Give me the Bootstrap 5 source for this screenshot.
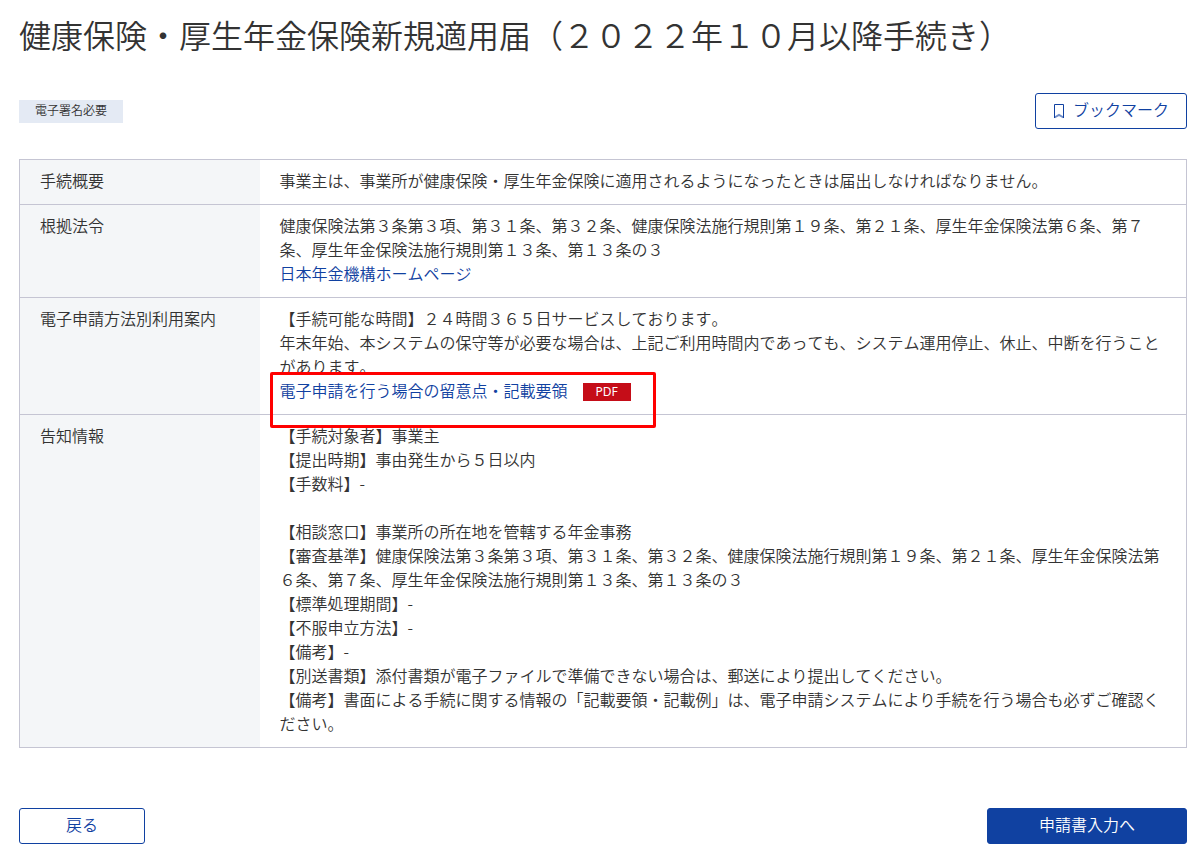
<!DOCTYPE html>
<html lang="ja">
<head>
<meta charset="utf-8">
<meta name="viewport" content="width=device-width, initial-scale=1">
<title>健康保険・厚生年金保険新規適用届</title>
<link rel="stylesheet" href="https://cdn.jsdelivr.net/npm/bootstrap@5.3.0/dist/css/bootstrap.min.css">
<style>
  body { font-family: "Noto Sans CJK JP", sans-serif; font-weight: 350; font-kerning: none; font-size: 16px; line-height: 24px; color: #333; background: #fff; }
  .page { padding: 10px 8px 16px 19px; }
  .page-title { font-size: 32px; line-height: 48px; font-weight: 350; margin-bottom: 35px; }
  .sign-tag { background: #e4eaf4; font-size: 12px; line-height: 20px; padding: 0 16px 3px; }
  .btn { --bs-btn-font-weight: 350; --bs-btn-padding-y: 0; --bs-btn-border-radius: 3px; height: 36px; padding-bottom: 4px; }
  .btn-line { --bs-btn-color: #1041a1; --bs-btn-border-color: #1041a1; --bs-btn-bg: #fff; --bs-btn-hover-color: #1041a1; --bs-btn-hover-border-color: #1041a1; --bs-btn-hover-bg: #e4eaf4; }
  .btn-fill { --bs-btn-color: #fff; --bs-btn-border-color: #1041a1; --bs-btn-bg: #1041a1; --bs-btn-hover-color: #fff; --bs-btn-hover-bg: #0c3482; min-width: 200px; }
  .btn-mark { --bs-btn-padding-x: 17px; gap: 8px; }
  .btn-back { min-width: 126px; }
  .info-table { --bs-table-color: #333; border: 1px solid #c5c5d3; margin: 30px 0 60px; }
  .info-table > tbody > tr > * { padding: 8px 20px 12px; border-bottom: 1px solid #c5c5d3; }
  .info-table > tbody > tr > th { width: 240px; font-weight: 350; --bs-table-bg: #f4f6f8; }
  .info-table a { color: #1041a1; }
  .pdf-tag { background: #c50d18; color: #fff; font: 400 12px/18px "Noto Sans", sans-serif; padding: 0 13px; margin: 5px 0 1px 15px; }
  .marked-area { border: 3px solid #f00; border-radius: 2px; top: -6px; left: -10px; width: 386px; height: 56px; pointer-events: none; }
</style>
</head>
<body>
<main class="page container-fluid">
  <h1 class="page-title">健康保険・厚生年金保険新規適用届（２０２２年１０月以降手続き）</h1>

  <div class="d-flex justify-content-between align-items-center">
    <span class="sign-tag">電子署名必要</span>
    <button type="button" class="btn btn-line btn-mark d-inline-flex align-items-center">
      <svg class="mt-1" width="12" height="16" viewBox="0 0 12 16" fill="none" aria-hidden="true"><path d="M1.5 15V1.500h9V15" stroke="#1041a1"/><path d="M1.5 14.5 6 12l4.5 2.500" stroke="#1041a1" stroke-opacity=".6" stroke-width="2"/></svg>
      <span>ブックマーク</span>
    </button>
  </div>

  <table class="table info-table">
    <tbody>
      <tr>
        <th scope="row">手続概要</th>
        <td>事業主は、事業所が健康保険・厚生年金保険に適用されるようになったときは届出しなければなりません。</td>
      </tr>
      <tr>
        <th scope="row">根拠法令</th>
        <td>健康保険法第３条第３項、第３１条、第３２条、健康保険法施行規則第１９条、第２１条、厚生年金保険法第６条、第７条、厚生年金保険法施行規則第１３条、第１３条の３<br>
          <a href="#" class="text-decoration-none">日本年金機構ホームページ</a></td>
      </tr>
      <tr>
        <th scope="row">電子申請方法別利用案内</th>
        <td>【手続可能な時間】２４時間３６５日サービスしております。<br>年末年始、本システムの保守等が必要な場合は、上記ご利用時間内であっても、システム運用停止、休止、中断を行うことがあります。
          <div class="position-relative d-flex align-items-center">
            <a href="#" class="text-decoration-none">電子申請を行う場合の留意点・記載要領</a>
            <span class="pdf-tag">PDF</span>
            <span class="marked-area position-absolute"></span>
          </div></td>
      </tr>
      <tr>
        <th scope="row">告知情報</th>
        <td>【手続対象者】事業主<br>【提出時期】事由発生から５日以内<br>【手数料】-<br><br>【相談窓口】事業所の所在地を管轄する年金事務<br>【審査基準】健康保険法第３条第３項、第３１条、第３２条、健康保険法施行規則第１９条、第２１条、厚生年金保険法第６条、第７条、厚生年金保険法施行規則第１３条、第１３条の３<br>【標準処理期間】-<br>【不服申立方法】-<br>【備考】-<br>【別送書類】添付書類が電子ファイルで準備できない場合は、郵送により提出してください。<br>【備考】書面による手続に関する情報の「記載要領・記載例」は、電子申請システムにより手続を行う場合も必ずご確認ください。</td>
      </tr>
    </tbody>
  </table>

  <div class="d-flex justify-content-between">
    <button type="button" class="btn btn-line btn-back">戻る</button>
    <button type="button" class="btn btn-fill">申請書入力へ</button>
  </div>
</main>
<script src="https://cdn.jsdelivr.net/npm/bootstrap@5.3.0/dist/js/bootstrap.bundle.min.js"></script>
</body>
</html>
